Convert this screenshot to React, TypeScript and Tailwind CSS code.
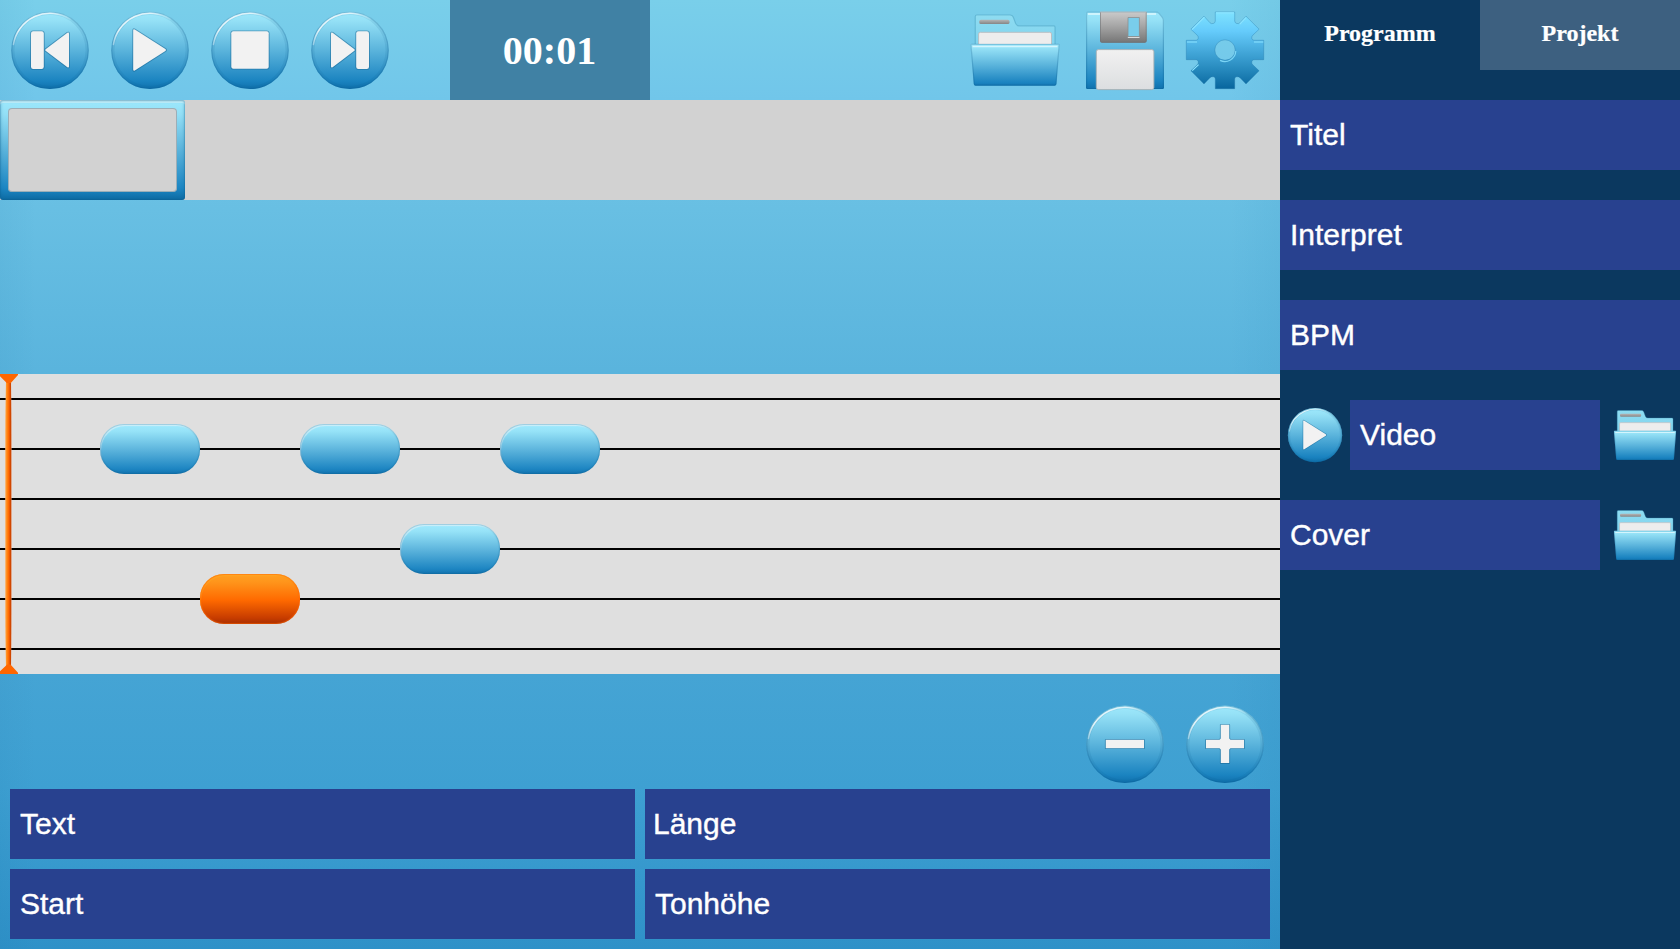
import { useId, type ReactNode } from "react";

function GlossGradient({ id, y1 = 11, y2 = 89 }: { id: string; y1?: number; y2?: number }) {
  return (
    <linearGradient id={id} gradientUnits="userSpaceOnUse" x1="0" x2="0" y1={y1} y2={y2}>
      <stop offset="0" stopColor="#9fe9fd" />
      <stop offset="0.12" stopColor="#95e1f6" />
      <stop offset="0.5" stopColor="#5bb4dc" />
      <stop offset="0.9" stopColor="#1a83c0" />
      <stop offset="1" stopColor="#0f70ac" />
    </linearGradient>
  );
}

function RoundIcon({ children, className = "size-[100px]" }: { children: ReactNode; className?: string }) {
  const id = useId();
  return (
    <svg viewBox="0 0 100 100" className={className}>
      <defs>
        <GlossGradient id={id} />
        <linearGradient id={id + "h"} gradientUnits="userSpaceOnUse" x1="12" x2="72" y1="46" y2="16">
          <stop offset="0" stopColor="#fff" stopOpacity="0.3" />
          <stop offset="0.2" stopColor="#fff" stopOpacity="0.8" />
          <stop offset="0.75" stopColor="#fff" stopOpacity="0.7" />
          <stop offset="1" stopColor="#fff" stopOpacity="0" />
        </linearGradient>
      </defs>
      <circle cx="50" cy="50.3" r="38.8" fill={`url(#${id})`} />
      <circle cx="50" cy="50.3" r="37.2" fill="none" stroke="#0c5d8c" strokeOpacity="0.1" strokeWidth="3.2" />
      <circle cx="50" cy="50.3" r="38.2" fill="none" stroke="#0c5d8c" strokeOpacity="0.22" strokeWidth="1.2" />
      <path d="M13.4 44.5A37.2 37.2 0 0 1 70 19" fill="none" stroke={`url(#${id}h)`} strokeWidth="1.5" strokeLinecap="round" />
      <g fill="#f2f2f2" stroke="#14608e" strokeOpacity="0.5" strokeWidth="1.8" strokeLinejoin="round" paintOrder="stroke">
        {children}
      </g>
    </svg>
  );
}

const PrevGlyph = () => (
  <>
    <rect x="31" y="31.3" width="12.8" height="37.6" rx="2.2" />
    <path d="M45.6 49.2 67.4 32.8Q69 32 69 33.6V66.4Q69 68 67.4 67.2L45.6 50.8Q44.8 50 45.6 49.2Z" />
  </>
);
const PlayGlyph = () => (
  <path d="M33.2 30.4Q33.2 28.6 34.8 29.6L65.4 49Q66.8 50 65.4 51L34.8 70.4Q33.2 71.4 33.2 69.6Z" />
);
const StopGlyph = () => <rect x="31.3" y="31.3" width="37.4" height="37.4" rx="2" />;
const NextGlyph = () => (
  <>
    <path d="M54.4 49.2 32.6 32.8Q31 32 31 33.6V66.4Q31 68 32.6 67.2L54.4 50.8Q55.2 50 54.4 49.2Z" />
    <rect x="56.2" y="31.3" width="12.8" height="37.6" rx="2.2" />
  </>
);
const MinusGlyph = () => <rect x="30.8" y="45.8" width="38.2" height="8.4" />;
const PlusGlyph = () => (
  <path d="M45.8 30.8H54.2V44.6L55.4 45.8H69V54.2H55.4L54.2 55.4V69H45.8V55.4L44.6 54.2H31V45.8H44.6L45.8 44.6Z" />
);

function FolderIcon({ className = "size-[100px]" }: { className?: string }) {
  const id = useId();
  return (
    <svg viewBox="0 0 100 100" className={className}>
      <defs>
        <GlossGradient id={id} y1={43} y2={87} />
        <linearGradient id={id + "b"} x1="0" x2="0" y1="0" y2="1">
          <stop offset="0" stopColor="#8edcf1" />
          <stop offset="1" stopColor="#80d3ee" />
        </linearGradient>
        <linearGradient id={id + "g"} x1="0" x2="0" y1="0" y2="1">
          <stop offset="0" stopColor="#b5b5b5" />
          <stop offset="1" stopColor="#858585" />
        </linearGradient>
      </defs>
      <path
        d="M10.3 46V16.5Q10.3 15 11.8 15H45Q47.3 15 48.2 17L50.6 23.4Q51.5 25.8 54 25.8H88.6Q90 25.8 90 27.3V46Z"
        fill={`url(#${id}b)`}
        stroke="#3b93b3"
        strokeOpacity="0.4"
        strokeWidth="1.2"
      />
      <rect x="14.3" y="19.8" width="30.2" height="4.2" rx="1.6" fill={`url(#${id}g)`} />
      <path d="M13.6 46V34Q13.6 32.3 15.3 32.3H84.8Q86.5 32.3 86.5 34V46Z" fill="#ededed" stroke="#b9c0c4" strokeWidth="1" />
      <path d="M6.6 44H93.4Q94.5 44 94.4 45L91.4 84Q91.2 85.7 89.6 85.7H10.6Q9 85.7 8.8 84L5.6 45Q5.5 44 6.6 44Z" fill={`url(#${id})`} />
      <path d="M6.6 44.4H93.4Q94.2 44.4 94.1 45L91 83.9Q90.8 85.2 89.6 85.2H10.6Q9.4 85.2 9.2 83.9L6 45Q5.9 44.4 6.6 44.4Z" fill="none" stroke="#0c5d8c" strokeOpacity="0.25" strokeWidth="1.2" />
      <path d="M7.5 46.4H92.5" stroke="#d4f5fd" strokeWidth="1.5" />
    </svg>
  );
}

function SaveIcon() {
  const id = useId();
  return (
    <svg viewBox="0 0 100 100" className="size-[100px]">
      <defs>
        <GlossGradient id={id} />
        <linearGradient id={id + "m"} x1="0" x2="0" y1="0" y2="1">
          <stop offset="0" stopColor="#cbcbcb" />
          <stop offset="0.5" stopColor="#a2a2a2" />
          <stop offset="1" stopColor="#757575" />
        </linearGradient>
        <linearGradient id={id + "l"} x1="0" x2="0" y1="0" y2="1">
          <stop offset="0" stopColor="#f1f1f1" />
          <stop offset="1" stopColor="#dcdee0" />
        </linearGradient>
      </defs>
      <path d="M12.5 11.7H80Q83 11.7 84.2 13L88 17.5Q89 18.7 89 20.5V87.5Q89 89 87.5 89H12.5Q11 89 11 87.5V13.2Q11 11.7 12.5 11.7Z" fill={`url(#${id})`} />
      <path d="M12.8 12.2H80Q82.8 12.2 84 13.4L87.5 17.7Q88.4 18.9 88.4 20.5V87.2Q88.4 88.5 87.3 88.5H12.7Q11.6 88.5 11.6 87.4V13.3Q11.6 12.2 12.8 12.2Z" fill="none" stroke="#0c5d8c" strokeOpacity="0.28" strokeWidth="1.2" />
      <path d="M13 14H81" stroke="#dff8fe" strokeWidth="1.5" />
      <path d="M25 11.7H71.7V40.8Q71.7 42.8 69.7 42.8H27Q25 42.8 25 40.8Z" fill={`url(#${id}m)`} />
      <path d="M25.5 12V40.8Q25.5 42.3 27 42.3H69.7Q71.2 42.3 71.2 40.8V12" fill="none" stroke="#6b7073" strokeOpacity="0.55" />
      <path d="M25.5 12.2H71.2" stroke="#adb7bb" />
      <rect x="53" y="17.6" width="11.3" height="18.8" fill="#79cdeb" />
      <path d="M52.8 37.4H64.5" stroke="#dcdcdc" strokeWidth="1.2" />
      <path d="M53 36.5V17.5H64.4V36.5Z" fill="none" stroke="#8b8f91" strokeWidth="0.8" />
      <rect x="21.3" y="49.6" width="57.6" height="40" rx="2.2" fill={`url(#${id}l)`} stroke="#a8b0b4" strokeWidth="0.9" />
    </svg>
  );
}

function GearIcon() {
  const id = useId();
  return (
    <svg viewBox="0 0 100 100" className="size-[100px]">
      <defs>
        <linearGradient id={id} gradientUnits="userSpaceOnUse" x1="0" x2="0" y1="11" y2="89">
          <stop offset="0" stopColor="#80e4ff" />
          <stop offset="0.26" stopColor="#65cbfb" />
          <stop offset="0.5" stopColor="#46aadc" />
          <stop offset="0.75" stopColor="#2689bd" />
          <stop offset="1" stopColor="#07659d" />
        </linearGradient>
      </defs>
      <path
        fillRule="evenodd"
        d="M40.3 12H59.7V21Q59.8 22.8 61.5 23.4Q63.6 24.2 65 22.8L71 16.2L84.1 29.2L77.8 35.2Q76.2 36.8 76.8 38.5Q77.3 40.3 79 40.3H88.7V59.7H79Q77.3 59.7 76.8 61.5Q76.2 63.2 77.8 64.8L84.1 70.8L71 83.9L65 77.8Q63.4 76.3 61.5 76.8Q59.7 77.4 59.7 79V88.7H40.3V79Q40.3 77.4 38.5 76.8Q36.6 76.3 35 77.8L29 83.9L15.9 70.8L22.2 64.8Q23.8 63.2 23.2 61.5Q22.7 59.7 21 59.7H11.3V40.3H21Q22.7 40.3 23.2 38.5Q23.8 36.8 22.2 35.2L15.9 29.2L29 16.2L35 22.8Q36.4 24.2 38.5 23.4Q40.2 22.8 40.3 21ZM50 39.8A10.2 10.2 0 1 0 50 60.2A10.2 10.2 0 1 0 50 39.8Z"
        fill={`url(#${id})`}
        stroke="#1b6da0"
        strokeOpacity="0.35"
        strokeWidth="0.9"
      />
      <g fill="none" stroke="#8ce4ff" strokeWidth="1.2">
        <path d="M41 12.8H59M17 29.6 29.4 17.2M64.8 24.2 71 17.6M12 42H22M79 42H88.3M17.2 70.6 23.6 64.6" />
        <path d="M60.8 51A11 11 0 0 1 45 60.4" strokeOpacity="0.8" />
      </g>
    </svg>
  );
}

function Button({ label, children, className = "" }: { label: string; children: ReactNode; className?: string }) {
  return (
    <button type="button" aria-label={label} className={"block shrink-0 " + className}>
      {children}
    </button>
  );
}

function Field({ label, className = "px-2.5" }: { label: string; className?: string }) {
  return (
    <div className={"flex h-[70px] items-center bg-[#28418f] font-['Liberation_Sans',Arial,sans-serif] text-[30px] leading-[34px] text-white [-webkit-text-stroke:0.4px_white] " + className}>
      {label}
    </div>
  );
}

const notes = [
  { x: 100, y: 50, active: false },
  { x: 200, y: 200, active: true },
  { x: 300, y: 50, active: false },
  { x: 400, y: 150, active: false },
  { x: 500, y: 50, active: false },
];

function Note({ x, y, active }: { x: number; y: number; active: boolean }) {
  return (
    <div
      style={{ left: x, top: y }}
      className={
        "absolute h-[50px] w-[100px] rounded-[24px] " +
        (active
          ? "bg-[linear-gradient(#ffa022,#ff951b_16%,#ff6a00_52%,#c73c00_88%,#a82f00)] shadow-[inset_0_0_1px_1px_rgba(255,100,0,0.55),inset_1px_2px_1px_rgba(255,180,40,0.5)]"
          : "bg-[linear-gradient(#9fe9fd,#97e3f8_14%,#5cb4dc_52%,#1d85c2_90%,#1272ad)] shadow-[inset_0_0_1px_1px_rgba(12,93,140,0.28),inset_1px_2px_1px_rgba(255,255,255,0.55)]")
      }
    />
  );
}

function Playhead() {
  const id = useId();
  return (
    <svg viewBox="0 0 18 300" className="absolute top-0 left-0 h-[300px] w-[18px]">
      <defs>
        <linearGradient id={id} x1="0" x2="1" y1="0" y2="0">
          <stop offset="0" stopColor="#ffb066" />
          <stop offset="0.25" stopColor="#ff8c1a" />
          <stop offset="0.55" stopColor="#ff6600" />
          <stop offset="0.85" stopColor="#cc4400" />
          <stop offset="1" stopColor="#e08a60" />
        </linearGradient>
      </defs>
      <path d="M6 6H11Q11.6 40 11.6 60V240Q11.6 260 11 294H6Q5.2 260 5.2 240V60Q5.2 40 6 6Z" fill={`url(#${id})`} />
      <path d="M0 0H18V1L10.8 9H6.8L0 2.3ZM0 300H18V298.7L10.5 290.5H7.2L0 297.2Z" fill="#ff6600" />
    </svg>
  );
}

function Sidebar() {
  return (
    <aside className="flex w-[400px] shrink-0 flex-col bg-[#0b385f]">
      <nav className="mb-[30px] grid h-[70px] grid-cols-2 text-center font-['Liberation_Serif','Times_New_Roman',serif] text-2xl leading-[66px] font-bold text-white [-webkit-text-stroke:0.2px_white]">
        <div>Programm</div>
        <div className="bg-[#3d6080]">Projekt</div>
      </nav>
      <div className="flex flex-col gap-[30px]">
        <Field label="Titel" />
        <Field label="Interpret" />
        <Field label="BPM" />
        <div className="flex">
          <Button label="Video abspielen">
            <RoundIcon className="size-[70px]">
              <PlayGlyph />
            </RoundIcon>
          </Button>
          <Field label="Video" className="w-[250px] px-2.5" />
          <Button label="Video öffnen" className="ml-auto">
            <FolderIcon className="size-[70px]" />
          </Button>
        </div>
        <div className="flex">
          <Field label="Cover" className="w-[320px] px-2.5" />
          <Button label="Cover öffnen" className="ml-auto">
            <FolderIcon className="size-[70px]" />
          </Button>
        </div>
      </div>
    </aside>
  );
}

export default function App() {
  return (
    <div className="flex h-[949px] w-[1680px] overflow-hidden">
      <main className="flex w-[1280px] shrink-0 flex-col bg-[linear-gradient(90deg,rgba(0,90,140,0.05),transparent_36px,transparent_1230px,rgba(0,90,140,0.05)),linear-gradient(#79cfea,#71c6ea_10.5%,#68bfe3_22%,#5ab4dd_39%,#45a4d4_71%,#3ea0d2_83%,#2f91c8)]">
        <header className="flex h-[100px] shrink-0 pr-[5px]">
          <Button label="Zurück"><RoundIcon><PrevGlyph /></RoundIcon></Button>
          <Button label="Abspielen"><RoundIcon><PlayGlyph /></RoundIcon></Button>
          <Button label="Stopp"><RoundIcon><StopGlyph /></RoundIcon></Button>
          <Button label="Weiter"><RoundIcon><NextGlyph /></RoundIcon></Button>
          <div className="ml-[50px] w-[200px] bg-[#4081a4] pr-px text-center font-['Liberation_Serif','Times_New_Roman',serif] text-[40px] leading-[102px] font-bold text-white">
            00:01
          </div>
          <div className="ml-auto flex gap-2.5">
            <Button label="Öffnen"><FolderIcon /></Button>
            <div className="flex">
              <Button label="Speichern"><SaveIcon /></Button>
              <Button label="Einstellungen"><GearIcon /></Button>
            </div>
          </div>
        </header>

        <section className="h-[100px] shrink-0 bg-[#d2d2d2]">
          <div className="h-[100px] w-[185px] rounded-[3px] bg-[linear-gradient(#8fd3e2,#9be7fb_3%,#93dff6_14%,#5ab3db_50%,#1c86c3_88%,#0e6ba3)] p-2 shadow-[inset_0_0_1px_1px_rgba(12,93,140,0.22),inset_0_3px_0_rgba(255,255,255,0.35),inset_0_0_3px_1px_rgba(12,93,140,0.25)]">
            <div className="h-full rounded-[4px] bg-[#d2d2d2] shadow-[inset_0_0_0_1px_rgba(90,130,150,0.45)]" />
          </div>
        </section>

        <section className="relative mt-[174px] h-[300px] shrink-0 bg-[#dfdfdf] bg-[linear-gradient(transparent_24px,#000_24px,#000_26px,transparent_26px)] bg-[length:100%_50px]">
          {notes.map((n) => (
            <Note key={`${n.x}-${n.y}`} {...n} />
          ))}
          <Playhead />
        </section>

        <div className="mt-5 mb-[-5px] flex h-[100px] shrink-0 justify-end pr-[5px]">
          <Button label="Verkleinern"><RoundIcon><MinusGlyph /></RoundIcon></Button>
          <Button label="Vergrößern"><RoundIcon><PlusGlyph /></RoundIcon></Button>
        </div>

        <section className="grid grid-cols-2 gap-2.5 px-2.5">
          <Field label="Text" />
          <Field label="Länge" className="pr-2.5 pl-2" />
          <Field label="Start" />
          <Field label="Tonhöhe" />
        </section>
      </main>
      <Sidebar />
    </div>
  );
}
